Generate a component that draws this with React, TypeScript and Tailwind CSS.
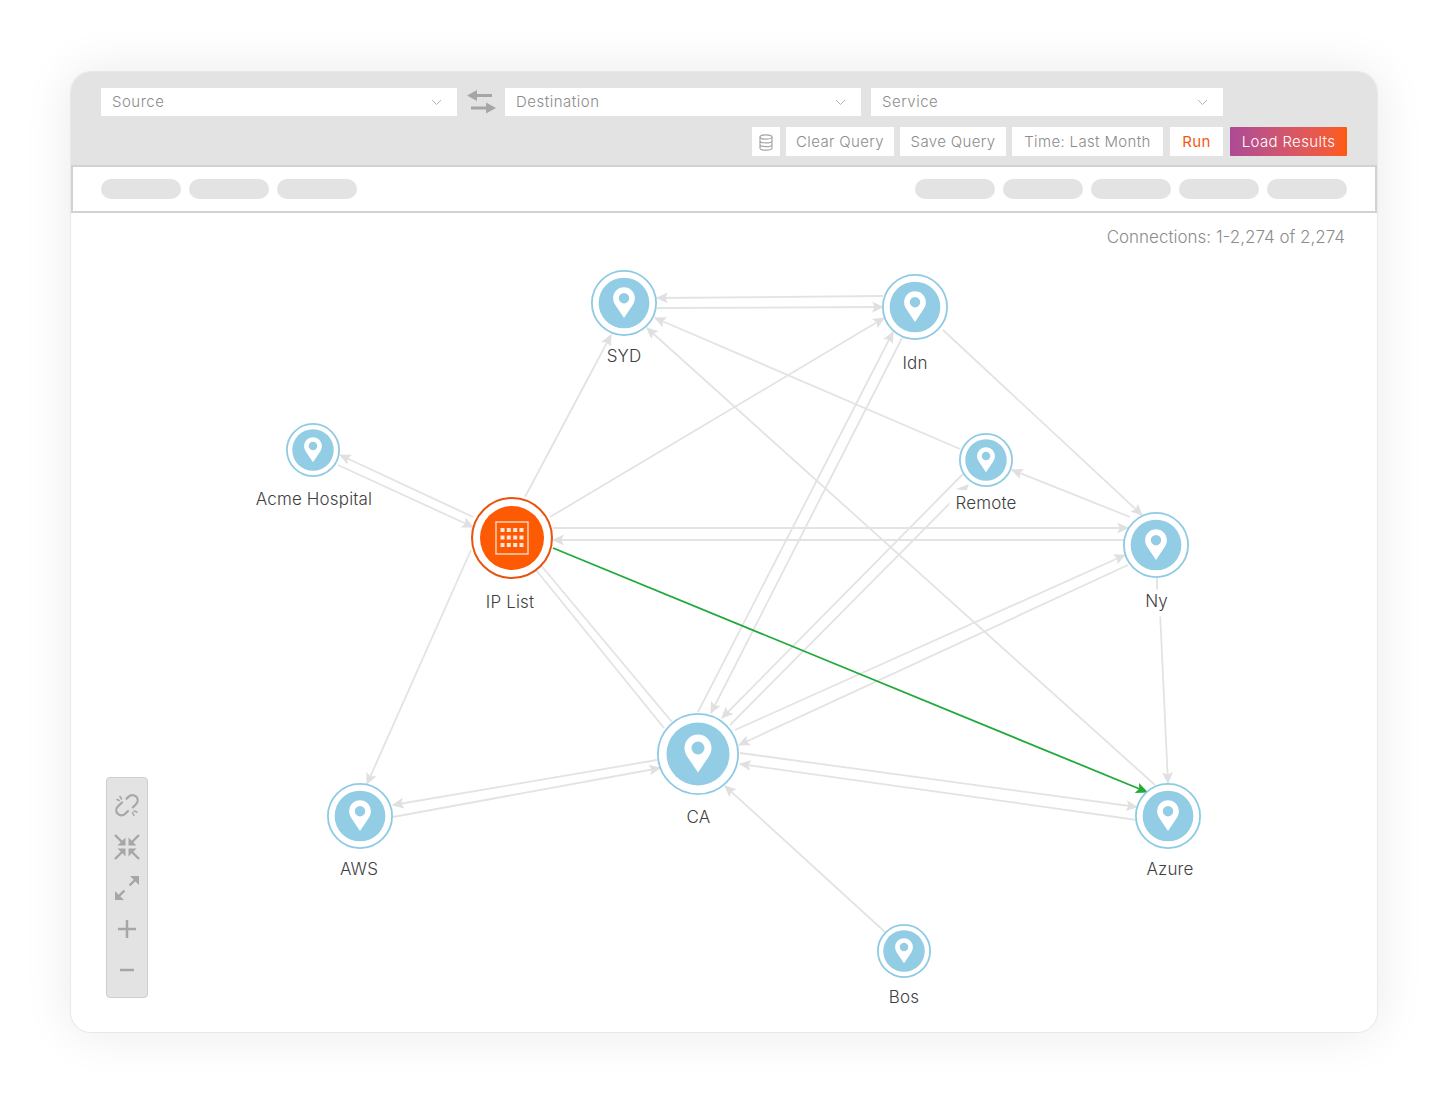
import React from "react";

type Pt = [number, number, number, number, (0 | 1)?];
const edges: Pt[] = [
  [883, 296, 657, 298, 1],
  [657, 308, 883, 307, 1],
  [525, 497, 611, 335, 1],
  [550, 517, 884, 318, 1],
  [960, 449, 655, 318, 1],
  [1155, 785, 647, 328, 1],
  [943, 330, 1142, 515, 1],
  [698, 712, 893, 332, 1],
  [902, 338, 711, 713, 1],
  [963, 474, 722, 718, 1],
  [730, 725, 968, 485, 1],
  [1130, 517, 1012, 470, 1],
  [338, 465, 473, 527, 1],
  [473, 517, 340, 455, 1],
  [553, 528, 1128, 528, 1],
  [1124, 540, 553, 540, 1],
  [471, 550, 367, 784, 1],
  [539, 563, 672, 722, 0],
  [536, 570, 664, 728, 0],
  [735, 730, 1125, 555, 1],
  [1128, 565, 739, 745, 1],
  [1159, 590, 1168, 783, 1],
  [1157, 578, 1157, 590, 0],
  [740, 753, 1137, 807, 1],
  [1137, 820, 740, 764, 1],
  [657, 760, 393, 805, 1],
  [393, 817, 660, 768, 1],
  [885, 932, 725, 786, 1],
];

const nodes = [
  { name: "SYD", x: 624, y: 303, size: 66, lx: 624, ly: 356, cls: "px-[1px] leading-[20px]" },
  { name: "Idn", x: 915, y: 307, size: 66, lx: 915, ly: 363, cls: "px-[2px] leading-[24px]" },
  { name: "Acme Hospital", x: 313, y: 450, size: 54, lx: 314, ly: 499, cls: "px-[2px] leading-[24px]" },
  { name: "Remote", x: 986, y: 460, size: 54, lx: 986, ly: 503, cls: "px-[6px] leading-[26px]" },
  { name: "Ny", x: 1156, y: 545, size: 66, lx: 1156.5, ly: 603, cls: "px-[2px] leading-[23px] pb-[4px]" },
  { name: "CA", x: 698, y: 754, size: 82, lx: 698.5, ly: 817, cls: "px-[2px] leading-[24px]" },
  { name: "AWS", x: 360, y: 816, size: 66, lx: 359, ly: 869, cls: "px-[2px] leading-[24px]" },
  { name: "Azure", x: 1168, y: 816, size: 66, lx: 1170, ly: 869, cls: "px-[2px] leading-[24px]" },
  { name: "Bos", x: 904, y: 951, size: 54, lx: 904, ly: 997, cls: "px-[2px] leading-[24px]" },
];

function Pin({ size }: { size: number }) {
  const sw = (1.8 * 82) / size;
  return (
    <svg width={size} height={size} viewBox="0 0 82 82" className="block">
      <circle cx="41" cy="41" r={41 - sw / 2} fill="#fff" stroke="#8fcae4" strokeWidth={sw} />
      <circle cx="41" cy="41" r="31.500" fill="#93cce5" />
      <path
        fillRule="evenodd"
        fill="#fff"
        d="M41 21.500c-7.500 0-13.500 6-13.500 13.500 0 3 1 5.600 2.500 8.200L41 59.500l11-16.300c1.500-2.600 2.500-5.200 2.500-8.200 0-7.500-6-13.500-13.500-13.500zm0 7a6.500 6.500 0 1 1 0 13 6.500 6.500 0 0 1 0-13z"
      />
    </svg>
  );
}

function Chevron() {
  return (
    <svg width="11" height="7" viewBox="0 0 11 7" fill="none" stroke="#b5b5b5" strokeWidth="1">
      <path d="M1 1l4.500 4.500L10 1" />
    </svg>
  );
}

function Select({ label, className }: { label: string; className: string }) {
  return (
    <div className={`h-[28px] bg-white flex items-center justify-between pl-[11px] pr-[15px] text-[15px] font-light tracking-[0.5px] text-[#8c8c8c] ${className}`}>
      <span>{label}</span>
      <Chevron />
    </div>
  );
}

function Btn({ children, className }: { children: React.ReactNode; className: string }) {
  return (
    <div className={`h-[29px] bg-white flex items-center justify-center pt-[1px] text-[15px] font-light tracking-[0.35px] ${className}`}>
      {children}
    </div>
  );
}

function Pill() {
  return <div className="w-[80px] h-[20px] rounded-full bg-[#e3e3e3]" />;
}

const gray = "#a6a6a6";

function Slot({ children }: { children: React.ReactNode }) {
  return <div className="h-[41px] flex items-center justify-center">{children}</div>;
}

function CtlIcons() {
  return (
    <>
      <Slot>
        <svg width="26" height="26" viewBox="0 0 26 26" fill="none" stroke={gray} strokeWidth="2.200" strokeLinecap="round">
          <path d="M8 9.500L3.800 13.500a5.200 5.200 0 0 0 0 7.300 5.200 5.200 0 0 0 7.400 0l2.800-2.800" />
          <path d="M12.500 5.800l2.200-2.200a5.200 5.200 0 0 1 7.400 0 5.200 5.200 0 0 1 0 7.300l-3.300 3.500" />
          <path d="M6 3.500l1.500 2.500M3 6.500l2.300 1M20 22.500l-1.500-3M23 19l-3-1" strokeWidth="1.500" />
        </svg>
      </Slot>
      <Slot>
        <svg width="26" height="26" viewBox="0 0 26 26" fill="none" stroke={gray} strokeWidth="2.400">
          <path d="M1 1L8 8M25 1L18 8M1 25L8 18M25 25L18 18" />
          <path fill={gray} stroke="none" d="M11.500 11.500H3.500L11.500 3.500zM14.500 11.500h8L14.500 3.500zM11.500 14.500H3.500L11.500 22.500zM14.500 14.500h8L14.500 22.500z" />
        </svg>
      </Slot>
      <Slot>
        <svg width="26" height="26" viewBox="0 0 26 26" fill="none" stroke={gray} strokeWidth="2.400">
          <path d="M10.500 15.500L5 21M15.500 10.500L21 5" />
          <path fill={gray} stroke="none" d="M1 25V16L10 25zM25 1v9L16 1z" />
        </svg>
      </Slot>
      <Slot>
        <svg width="20" height="20" viewBox="0 0 20 20" stroke={gray} strokeWidth="2.500">
          <path d="M1 10h18M10 1v18" />
        </svg>
      </Slot>
      <Slot>
        <svg width="20" height="20" viewBox="0 0 20 20" stroke={gray} strokeWidth="2.500">
          <path d="M3 10h14" />
        </svg>
      </Slot>
    </>
  );
}

export default function App() {
  return (
    <div
      className="w-[1446px] h-[1118px] bg-white pl-[71px] pt-[72px]"
      style={{ fontFamily: "Inter, 'Liberation Sans', sans-serif" }}
    >
      <div className="w-[1306px] h-[960px] rounded-[20px] bg-white flex flex-col overflow-hidden shadow-[0_0_0_1px_#e8e8e8,0_0_50px_rgba(0,0,0,0.09)]">
        <div className="h-[93px] shrink-0 bg-[#e3e3e3] pl-[30px] pr-[30px] pt-[16px]">
          <div className="flex items-center">
            <Select label="Source" className="w-[356px]" />
            <svg width="30" height="26" viewBox="0 0 30 26" className="ml-[10px] mr-[8px]" fill={gray}>
              <path d="M0 6.500L10 1V5H25V8H10V12z" />
              <path d="M29 19L19 24.500V20.500H4v-3H19V13.500z" />
            </svg>
            <Select label="Destination" className="w-[356px]" />
            <Select label="Service" className="w-[352px] ml-[10px]" />
          </div>
          <div className="flex justify-end gap-[6px] mt-[11px]">
            <Btn className="w-[28px]">
              <svg width="14" height="17" viewBox="0 0 14 17" fill="none" stroke="#a6a6a6" strokeWidth="1.200">
                <ellipse cx="7" cy="3" rx="6" ry="2.200" />
                <path d="M1 3v11c0 1.200 2.700 2.200 6 2.200s6-1 6-2.200V3M1 6.700c0 1.200 2.700 2.200 6 2.200s6-1 6-2.200M1 10.400c0 1.200 2.700 2.200 6 2.200s6-1 6-2.200" />
              </svg>
            </Btn>
            <Btn className="w-[108px] text-[#8c8c8c]">Clear Query</Btn>
            <Btn className="w-[106px] text-[#8c8c8c]">Save Query</Btn>
            <Btn className="w-[151px] text-[#8c8c8c]">Time: Last Month</Btn>
            <Btn className="w-[53px] ml-[1px] font-normal text-[#f05a14]">Run</Btn>
            <div className="w-[117px] h-[29px] ml-[1px] pt-[1px] flex items-center justify-center text-[15px] font-light tracking-[0.35px] text-white bg-gradient-to-r from-[#ad4a96] to-[#fe5a03] rounded-[1px]">
              Load Results
            </div>
          </div>
        </div>
        <div className="h-[48px] shrink-0 bg-white border-2 border-[#d2d2d2] flex items-center justify-between pl-[28px] pr-[28px]">
          <div className="flex gap-[8px]">
            <Pill />
            <Pill />
            <Pill />
          </div>
          <div className="flex gap-[8px]">
            <Pill />
            <Pill />
            <Pill />
            <Pill />
            <Pill />
          </div>
        </div>
        <div className="relative flex-1">
          <div className="flex justify-end pr-[32px] pt-[13px] text-[17px] font-light leading-[22px] text-[#8c8c8c]">
            Connections: 1-2,274 of 2,274
          </div>
          <svg className="absolute left-0 top-0" width="1306" height="819" viewBox="71 213 1306 819" fill="none">
            <defs>
              <marker id="g" viewBox="0 0 10 10" refX="9" refY="5" markerWidth="12" markerHeight="12" markerUnits="userSpaceOnUse" orient="auto">
                <path d="M0 0.500L10 5L0 9.500L2 5Z" fill="#e0e0e0" />
              </marker>
              <marker id="gr" viewBox="0 0 10 10" refX="9" refY="5" markerWidth="12" markerHeight="12" markerUnits="userSpaceOnUse" orient="auto">
                <path d="M0 0.500L10 5L0 9.500L2 5Z" fill="#22a93c" />
              </marker>
            </defs>
            {edges.map(([a, b, c, d, m], i) => (
              <line key={i} x1={a} y1={b} x2={c} y2={d} stroke="#e3e3e3" strokeWidth="1.800" markerEnd={m ? "url(#g)" : undefined} />
            ))}
            <line x1="553" y1="548" x2="1147" y2="792" stroke="#22a93c" strokeWidth="1.800" markerEnd="url(#gr)" />
          </svg>
          {nodes.map((n) => (
            <React.Fragment key={n.name}>
              <div className="absolute" style={{ left: n.x - 71 - n.size / 2, top: n.y - 213 - n.size / 2 }}>
                <Pin size={n.size} />
              </div>
              <div
                className={`absolute -translate-x-1/2 -translate-y-1/2 whitespace-nowrap bg-white text-[17px] font-light tracking-[0.15px] text-[#3f3f3f] ${n.cls}`}
                style={{ left: n.lx - 71, top: n.ly - 213 }}
              >
                {n.name}
              </div>
            </React.Fragment>
          ))}
          <div className="absolute left-[400px] top-[284px]">
            <svg width="82" height="82" viewBox="0 0 82 82" className="block">
              <circle cx="41" cy="41" r="40" fill="#fff" stroke="#e8540f" strokeWidth="2" />
              <circle cx="41" cy="41" r="32" fill="#fe5a03" />
              <rect x="25" y="25" width="32" height="32" fill="none" stroke="#ffd9c2" strokeWidth="1.400" />
              <g fill="#ffe6d6">
                {[30.500, 36.800, 43.200, 49.500].flatMap((x) =>
                  [31, 38.500, 46].map((y) => <rect key={`${x}-${y}`} x={x - 1} y={y} width="4" height="4" />),
                )}
              </g>
            </svg>
          </div>
          <div className="absolute left-[439px] top-[389px] -translate-x-1/2 -translate-y-1/2 whitespace-nowrap text-[17px] font-light tracking-[0.15px] leading-[22px] text-[#3f3f3f]">
            IP List
          </div>
          <div className="absolute left-[35px] top-[564px] w-[42px] h-[221px] rounded-[4px] bg-[#e3e3e3] border border-[#cfcfcf] flex flex-col justify-center">
            <CtlIcons />
          </div>
        </div>
      </div>
    </div>
  );
}
